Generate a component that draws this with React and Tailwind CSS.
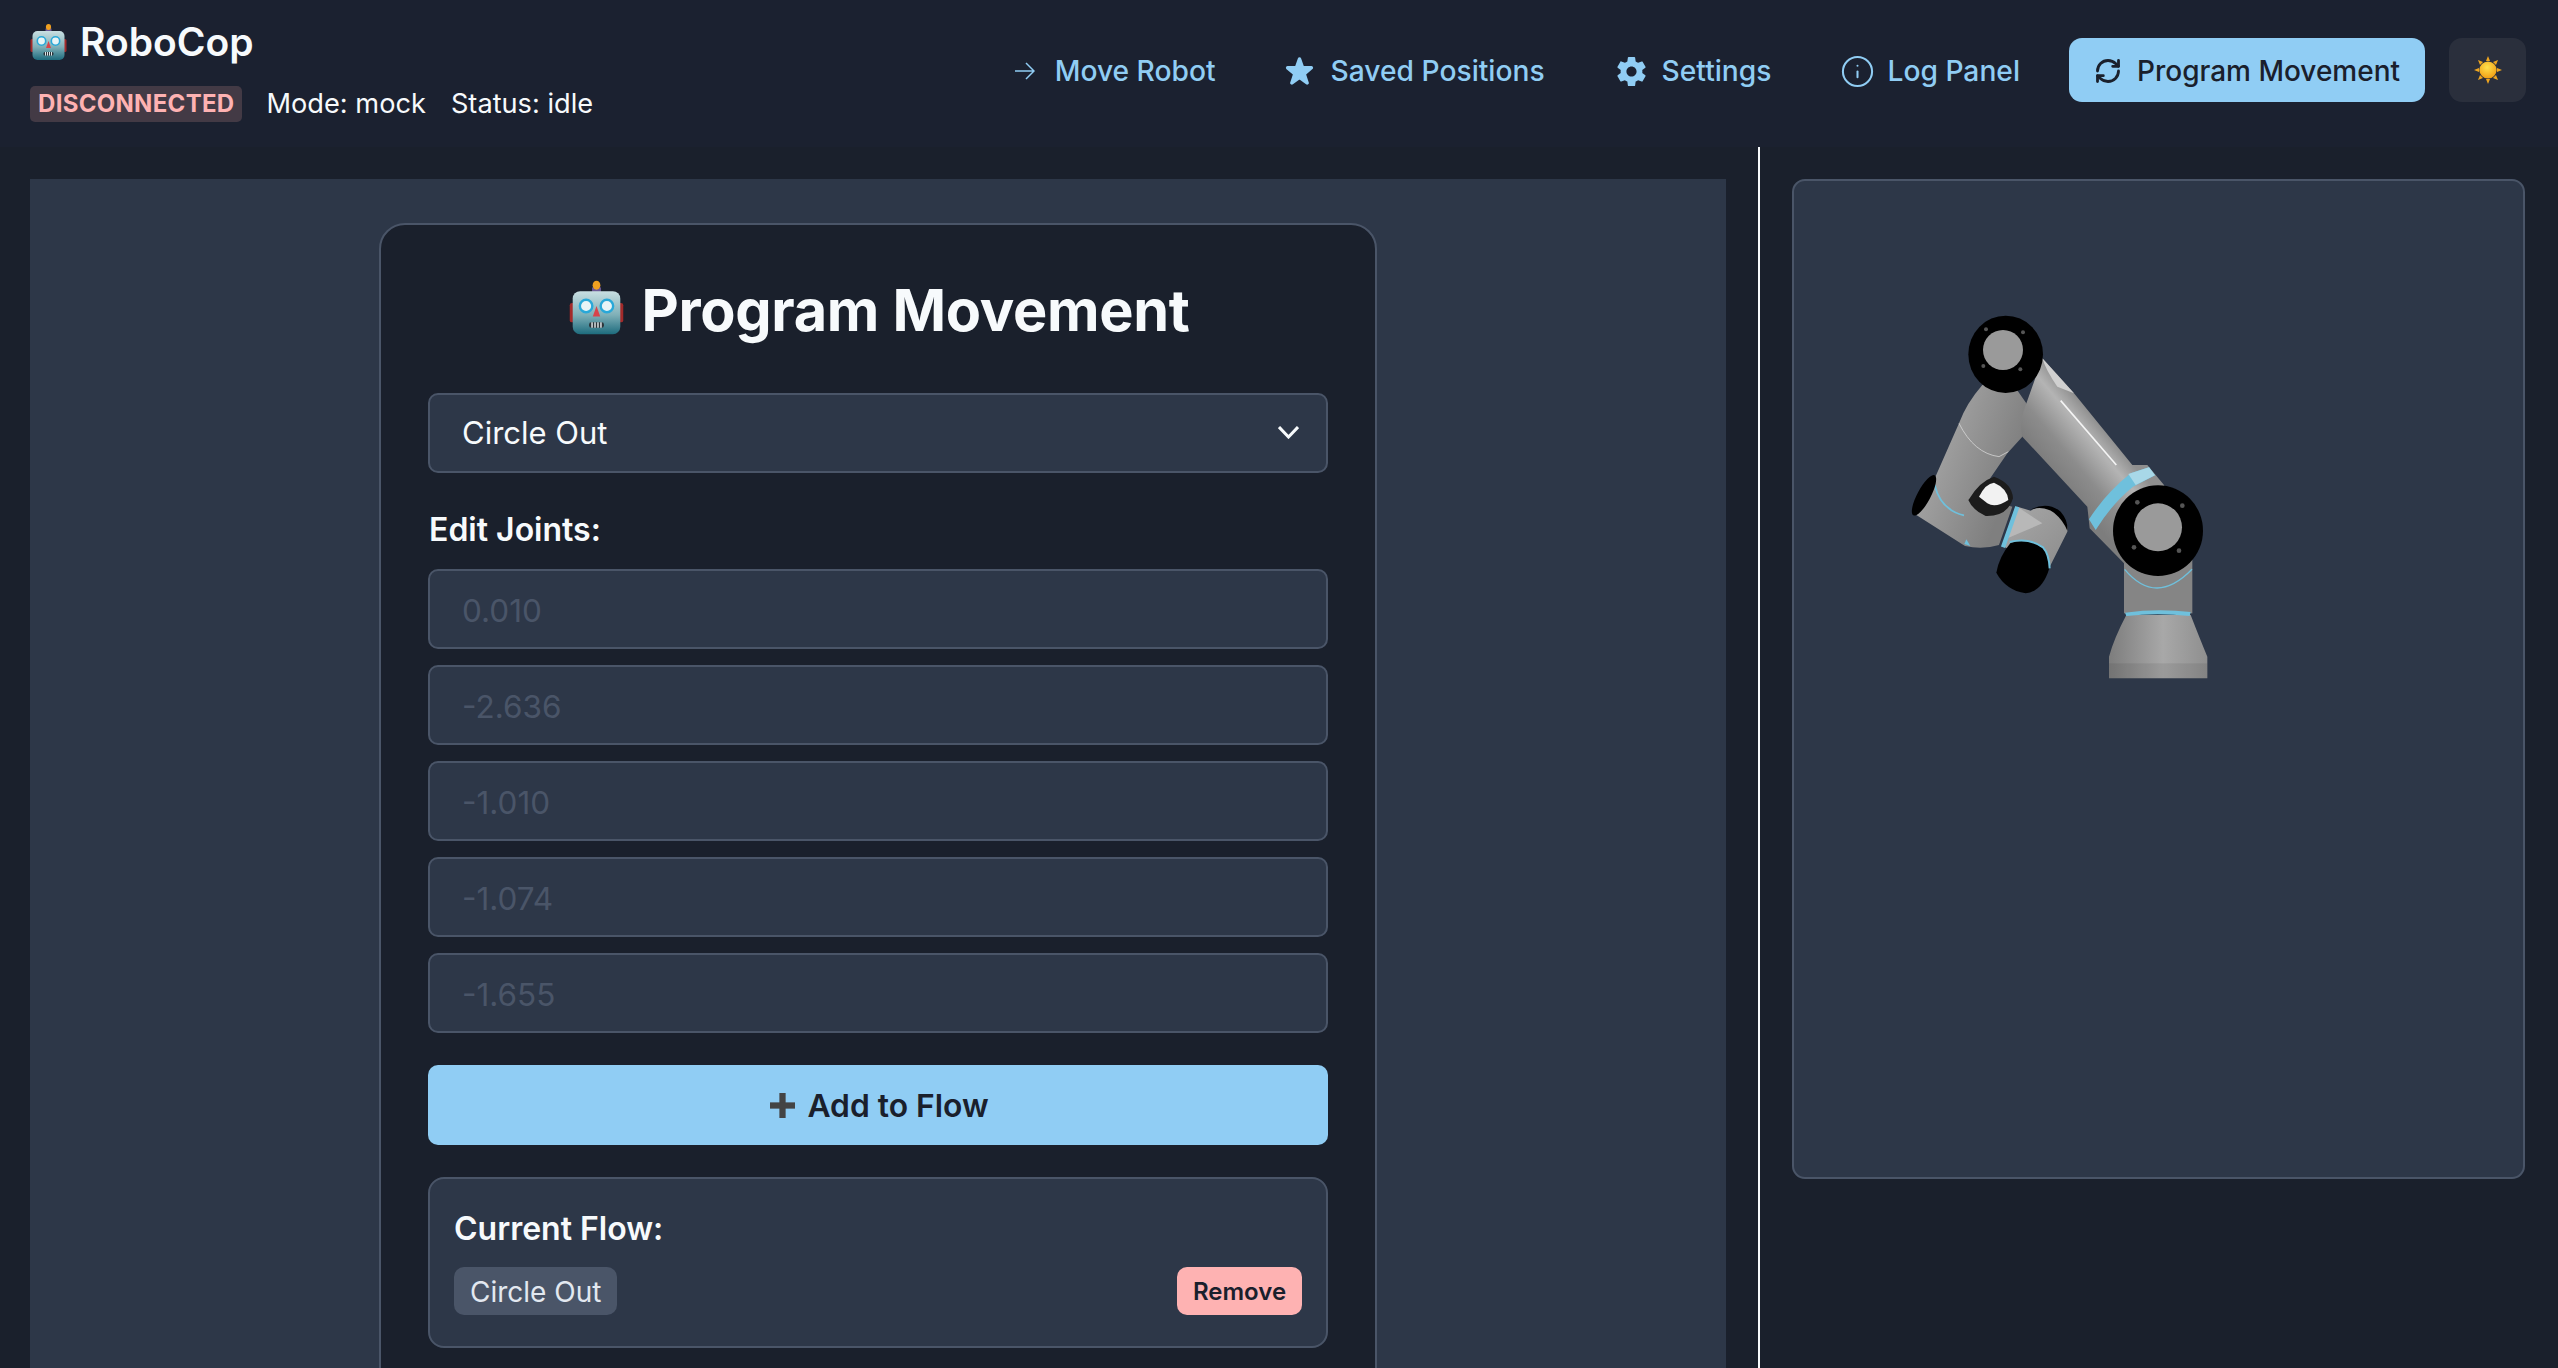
import { Info, RefreshCw } from "lucide-react";

function RobotEmoji({ className }) {
    return (
        <svg viewBox="0 0 37 36" className={className}>
            <defs>
                <linearGradient id="head" x1="0" y1="0" x2="0" y2="1">
                    <stop offset="0" stopColor="#c9dfe2" />
                    <stop offset="0.55" stopColor="#7fb0b8" />
                    <stop offset="1" stopColor="#1d6b7d" />
                </linearGradient>
            </defs>
            <rect x="0.5" y="15" width="3.5" height="13" rx="1.5" fill="#a32a2a" />
            <rect x="33" y="15" width="3.5" height="13" rx="1.5" fill="#a32a2a" />
            <rect x="15.5" y="4.5" width="6" height="4" fill="#6d5a96" />
            <ellipse cx="18.5" cy="3" rx="2.6" ry="3" fill="#f0a020" />
            <rect x="2.5" y="7" width="32" height="29" rx="5" fill="url(#head)" />
            <circle cx="11.5" cy="17" r="4.2" fill="#e8f4f6" stroke="#29a8d8" strokeWidth="1.6" />
            <circle cx="25.5" cy="17" r="4.2" fill="#e8f4f6" stroke="#29a8d8" strokeWidth="1.6" />
            <path d="M18.5 17 L21 24 L16 24 Z" fill="#d8434a" />
            <rect x="13.5" y="28" width="10" height="3.6" rx="1.5" fill="#2b3338" />
            <path d="M15.5 28v3.6M17.5 28v3.6M19.5 28v3.6M21.5 28v3.6" stroke="#dfe6e8" strokeWidth="1" />
        </svg>
    );
}

function SunEmoji() {
    return (
        <svg viewBox="0 0 28 28" className="w-[28px] h-[28px]">
            <defs>
                <radialGradient id="sun" cx="0.45" cy="0.35" r="0.7">
                    <stop offset="0" stopColor="#ffe14d" />
                    <stop offset="1" stopColor="#f09a10" />
                </radialGradient>
            </defs>
            <g fill="#eea520">
                <path d="M14 0l2 5h-4z" />
                <path d="M14 28l2-5h-4z" />
                <path d="M0 14l5-2v4z" />
                <path d="M28 14l-5-2v4z" />
                <path d="M4 4l5 2-3 3z" />
                <path d="M24 4l-5 2 3 3z" />
                <path d="M4 24l5-2-3-3z" />
                <path d="M24 24l-5-2 3-3z" />
            </g>
            <circle cx="14" cy="14" r="8.6" fill="url(#sun)" />
        </svg>
    );
}

function ArrowIcon() {
    return (
        <svg viewBox="0 0 20 18" className="w-[20px] h-[18px]" fill="none" stroke="currentColor" strokeWidth="1.5">
            <path d="M0 9H19M11 1L19 9L11 17" />
        </svg>
    );
}

function StarIcon() {
    return (
        <svg viewBox="0 0 24 24" className="w-[29px] h-[28px]" fill="currentColor">
            <path d="M23.555,8.729a1.505,1.505,0,0,0-1.406-.98H16.062a.5.5,0,0,1-.472-.334L13.405,1.222a1.5,1.5,0,0,0-2.81,0l-.005.016L8.41,7.415a.5.5,0,0,1-.471.334H1.85A1.5,1.5,0,0,0,.887,10.4l5.184,4.3a.5.5,0,0,1,.155.543L4.048,21.774a1.5,1.5,0,0,0,2.31,1.684l5.346-3.92a.5.5,0,0,1,.591,0l5.344,3.919a1.5,1.5,0,0,0,2.312-1.683l-2.178-6.535a.5.5,0,0,1,.155-.543l5.194-4.306A1.5,1.5,0,0,0,23.555,8.729Z" />
        </svg>
    );
}

function GearIcon() {
    return (
        <svg viewBox="2.5 2 19 20" className="w-[29px] h-[29px]" fill="currentColor">
            <path d="M19.43 12.98c.04-.32.07-.64.07-.98s-.03-.66-.07-.98l2.11-1.65c.19-.15.24-.42.12-.64l-2-3.46c-.12-.22-.39-.3-.61-.22l-2.49 1c-.52-.4-1.08-.73-1.69-.98l-.38-2.65C14.46 2.18 14.25 2 14 2h-4c-.25 0-.46.18-.49.42l-.38 2.65c-.61.25-1.17.59-1.69.98l-2.49-1c-.23-.09-.49 0-.61.22l-2 3.46c-.13.22-.07.49.12.64l2.11 1.65c-.04.32-.07.65-.07.98s.03.66.07.98l-2.11 1.65c-.19.15-.24.42-.12.64l2 3.46c.12.22.39.3.61.22l2.49-1c.52.4 1.08.73 1.69.98l.38 2.65c.03.24.24.42.49.42h4c.25 0 .46-.18.49-.42l.38-2.65c.61-.25 1.17-.59 1.69-.98l2.49 1c.23.09.49 0 .61-.22l2-3.46c.12-.22.07-.49-.12-.64l-2.11-1.65zM12 15.5c-1.93 0-3.5-1.57-3.5-3.5s1.57-3.5 3.5-3.5 3.5 1.57 3.5 3.5-1.57 3.5-3.5 3.5z" />
        </svg>
    );
}

function RobotArm() {
    return (
        <svg viewBox="0 0 1080 1200" className="w-[360px] h-[400px]">
            <defs>
                <linearGradient id="baseGrad" x1="0" y1="0" x2="1" y2="0">
                    <stop offset="0" stopColor="#7d7d7d" />
                    <stop offset="0.55" stopColor="#a8a8a8" />
                    <stop offset="1" stopColor="#8f8f8f" />
                </linearGradient>
                <linearGradient id="upperGrad" gradientUnits="userSpaceOnUse" x1="430" y1="440" x2="585" y2="310">
                    <stop offset="0" stopColor="#7d7d7d" />
                    <stop offset="0.35" stopColor="#8c8c8c" />
                    <stop offset="0.75" stopColor="#b4b4b4" />
                    <stop offset="1" stopColor="#8f8f8f" />
                </linearGradient>
                <linearGradient id="foreGrad" gradientUnits="userSpaceOnUse" x1="180" y1="480" x2="400" y2="560">
                    <stop offset="0" stopColor="#a0a0a0" />
                    <stop offset="1" stopColor="#7f7f7f" />
                </linearGradient>
                <linearGradient id="wristGrad" x1="0" y1="0" x2="1" y2="1">
                    <stop offset="0" stopColor="#a8a8a8" />
                    <stop offset="1" stopColor="#8c8c8c" />
                </linearGradient>
            </defs>

            {/* base */}
            <path d="M690 1165 L690 1100 Q705 1045 742 975 L935 975 Q962 1045 985 1100 L985 1165 Z" fill="url(#baseGrad)" />
            <rect x="690" y="1120" width="295" height="45" fill="#000" opacity="0.08" />
            <rect x="735" y="790" width="205" height="180" fill="#858585" />
            <path d="M738 968 Q835 955 935 966 L932 978 Q835 968 742 978 Z" fill="#6fc0dc" />
            <path d="M737 838 Q830 950 939 838" fill="none" stroke="#6fc0dc" strokeWidth="4" />

            {/* forearm */}
            <path d="M310 285 Q262 340 240 400 L165 570 L112 675 L258 768 Q310 780 360 765 L400 650 L300 620 L330 570 L385 490 L430 440 L470 380 L400 280 Z" fill="url(#foreGrad)" />
            <path d="M240 400 Q285 490 360 500 L388 485" fill="none" stroke="#e4e4e4" strokeWidth="2" />
            <path d="M167 585 Q185 660 255 676" fill="none" stroke="#6fc0dc" strokeWidth="5" />
            <path d="M256 762 L262 748 L274 768 Z" fill="#6fc0dc" />
            <ellipse cx="135" cy="616" rx="20" ry="68" transform="rotate(28 135 616)" fill="#000" />

            {/* upper arm */}
            <path d="M490 205 L585 310 L760 525 L805 525 L855 585 L900 720 L735 820 L632 715 L625 650 L430 440 Q420 400 435 360 Z" fill="url(#upperGrad)" />
            <path d="M490 205 Q540 260 585 310 L535 290 Q500 240 490 205 Z" fill="#d0d0d0" />
            <path d="M545 332 L712 525" stroke="#f4f4f4" strokeWidth="5" />
            <path d="M630 688 Q680 610 755 550 L810 532 L828 556 L762 590 Q700 640 650 720 Z" fill="#6fc0dc" />
            <path d="M748 552 L810 532 L828 556 L770 585 Z" fill="#a8d8e8" />

            {/* wrist */}
            <path d="M415 650 L455 662 Q500 635 540 670 Q570 700 565 725 L510 835 L375 770 Z" fill="url(#wristGrad)" />
            <path d="M415 650 L490 700 L385 745 Z" fill="#b8b8b8" />
            <path d="M452 660 Q505 632 545 665 Q568 692 565 722 Q552 690 525 668 Q490 645 452 660 Z" fill="#000" />
            <path d="M415 650 L372 772" stroke="#6fc0dc" strokeWidth="13" />
            <path d="M395 758 Q450 740 495 775 Q510 795 511 835 Q490 905 440 910 Q380 900 352 848 Q360 800 395 758 Z" fill="#000" />
            <path d="M392 756 Q450 742 492 772 Q510 792 512 835" fill="none" stroke="#6fc0dc" strokeWidth="6" />
            <path d="M270 628 Q300 575 345 560 Q400 580 402 625 Q385 680 320 678 Q280 660 268 630 Z" fill="#1c1c1c" />
            <path d="M300 620 Q320 580 345 578 Q385 595 388 630 Q350 655 325 640 Z" fill="#f2f2f2" />

            {/* joints */}
            <ellipse cx="380" cy="193" rx="112" ry="116" fill="#000" />
            <circle cx="372" cy="180" r="60" fill="#9a9a9a" />
            <g fill="#555">
                <circle cx="321" cy="118" r="6" />
                <circle cx="432" cy="127" r="6" />
                <circle cx="313" cy="228" r="6" />
                <circle cx="424" cy="238" r="6" />
            </g>
            <ellipse cx="837" cy="722" rx="135" ry="136" fill="#000" />
            <circle cx="837" cy="712" r="72" fill="#9a9a9a" />
            <g fill="#555">
                <circle cx="775" cy="637" r="7" />
                <circle cx="910" cy="647" r="7" />
                <circle cx="765" cy="772" r="7" />
                <circle cx="900" cy="782" r="7" />
            </g>
        </svg>
    );
}

const navItems = [
    { label: "Move Robot", icon: <ArrowIcon />, cls: "gap-[20px] pl-[26px] pr-[22px]" },
    { label: "Saved Positions", icon: <StarIcon />, cls: "gap-[17px] pl-[26px] pr-[28px]" },
    { label: "Settings", icon: <GearIcon />, cls: "gap-[16px] pl-[23px] pr-[25px]" },
    { label: "Log Panel", icon: <Info className="w-[35px] h-[35px]" strokeWidth={1.4} />, cls: "gap-[12px] pl-[23px] pr-[26px]" },
];

const joints = ["0.010", "-2.636", "-1.010", "-1.074", "-1.655"];

export default function App() {
    return (
        <div className="h-screen overflow-hidden bg-[#1a202c] text-[#f7fafc] font-['Inter',sans-serif]">
            <header className="h-[147px] flex justify-between bg-[#1b2130] pl-[30px] pr-[32px]">
                <div className="pt-[19px]">
                    <div className="flex items-center gap-[13px] h-[46px]">
                        <RobotEmoji className="w-[37px] h-[36px]" />
                        <span className="text-[39px] leading-[46px] font-semibold">RoboCop</span>
                    </div>
                    <div className="flex items-center mt-[19px] text-[27.2px]">
                        <span className="h-[36px] px-[8px] rounded-[5px] bg-[#433a45] text-[#feb2b2] text-[24px] leading-[36px] font-bold tracking-[0.3px]">DISCONNECTED</span>
                        <span className="ml-[24px]">Mode: mock</span>
                        <span className="ml-[25px]">Status: idle</span>
                    </div>
                </div>

                <nav className="flex items-start gap-[21px] pt-[38px]">
                    {navItems.map((item) => (
                        <button key={item.label} className={`h-[64px] pt-[2px] flex items-center text-[#90cdf4] text-[28.2px] font-medium ${item.cls}`}>
                            {item.icon}
                            {item.label}
                        </button>
                    ))}
                    <button className="h-[64px] w-[356px] ml-[2px] pt-[1px] flex items-center justify-center gap-[15px] rounded-[13px] bg-[#90cdf4] text-[#1a202c] text-[28px] font-medium">
                        <RefreshCw className="w-[28px] h-[28px]" strokeWidth={2.4} />
                        Program Movement
                    </button>
                    <button className="h-[64px] w-[77px] ml-[3px] flex items-center justify-center rounded-[13px] bg-[#2a2f3c]">
                        <SunEmoji />
                    </button>
                </nav>
            </header>

            <main className="flex pt-[32px] pl-[30px] pr-[32px] gap-[32px]">
                <section className="w-[1696px] h-[1300px] bg-[#2d3748] pt-[44px]">
                    <div className="w-[998px] mx-auto rounded-[26px] border-2 border-[#4a5568] bg-[#1a202c] px-[47px] pt-[45px] pb-[48px]">
                        <h1 className="flex items-center justify-center gap-[17px] h-[80px] pl-[3px] text-[57.6px] font-bold tracking-[-0.3px]">
                            <RobotEmoji className="w-[55px] h-[55px] -mt-[5px]" />
                            Program Movement
                        </h1>

                        <div className="relative mt-[43px]">
                            <select className="w-full h-[80px] appearance-none rounded-[10px] border-2 border-[#4a5568] bg-[#2d3748] pl-[32px] text-[31px] outline-none">
                                <option>Circle Out</option>
                            </select>
                            <svg viewBox="0 0 21 13" className="absolute right-[29px] top-[33px] w-[21px] h-[13px]" fill="none" stroke="#f7fafc" strokeWidth="3">
                                <path d="M1 1L10.5 11L20 1" />
                            </svg>
                        </div>

                        <p className="mt-[33px] mb-[15px] pl-[1px] h-[48px] leading-[48px] text-[32px] font-semibold">Edit Joints:</p>

                        <div className="flex flex-col gap-[16px]">
                            {joints.map((j) => (
                                <input
                                    key={j}
                                    readOnly
                                    placeholder={j}
                                    className="w-full h-[80px] rounded-[10px] border-2 border-[#4a5568] bg-[#2d3748] pl-[32px] pt-[2px] text-[31.5px] outline-none placeholder:text-[#4a5568]"
                                />
                            ))}
                        </div>

                        <button className="mt-[32px] w-full h-[80px] pt-[1px] pl-[3px] flex items-center justify-center gap-[12px] rounded-[10px] bg-[#90cdf4] text-[#1a202c] text-[31.8px] font-semibold">
                            <svg viewBox="0 0 24 24" className="w-[25px] h-[25px]" fill="#444">
                                <rect x="9" y="0" width="6" height="24" />
                                <rect x="0" y="9" width="24" height="6" />
                            </svg>
                            Add to Flow
                        </button>

                        <div className="mt-[32px] h-[171px] rounded-[16px] border-2 border-[#4a5568] bg-[#2d3748] px-[24px] pt-[26px]">
                            <p className="h-[48px] leading-[48px] text-[32px] font-semibold">Current Flow:</p>
                            <div className="mt-[14px] flex items-center justify-between">
                                <span className="h-[48px] px-[16px] rounded-[10px] bg-[#4a5568] text-[#e2e8f0] text-[28px] leading-[50px]">Circle Out</span>
                                <button className="h-[48px] w-[125px] pt-[1px] rounded-[10px] bg-[#feb2b2] text-[#1a202c] text-[24px] font-semibold">Remove</button>
                            </div>
                        </div>
                    </div>
                </section>

                <div className="w-[2px] h-[1300px] -mt-[32px] bg-[#f7fafc]" />

                <aside className="w-[733px] h-[1000px] rounded-[13px] border-2 border-[#4a5568] bg-[#2d3748] pl-[85px] pt-[109px]">
                    <RobotArm />
                </aside>
            </main>
        </div>
    );
}
